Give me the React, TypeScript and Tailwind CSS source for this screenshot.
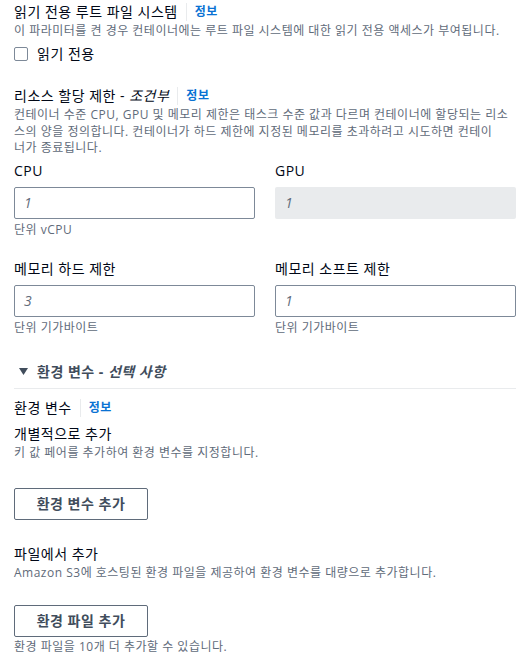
import React from "react";

const font = { fontFamily: '"Open Sans", "Noto Sans CJK KR", sans-serif' };

function Info() {
  return (
    <span className="flex items-center">
      <span className="mx-[8px] h-[18px] w-px bg-[#e9ebed]" />
      <span className="text-[12px] font-bold text-[#0972d3]">정보</span>
    </span>
  );
}

function Field({
  label,
  value,
  hint,
  disabled,
}: {
  label: string;
  value: string;
  hint?: string;
  disabled?: boolean;
}) {
  return (
    <div className="flex flex-col">
      <div className="text-[14px] leading-5 text-[#000716]">{label}</div>
      <div
        className={
          disabled
            ? "mt-[6px] flex h-8 items-center rounded-[2px] bg-[#e9ebed] px-[10px]"
            : "mt-[6px] flex h-8 items-center rounded-[2px] border border-[#7d8998] bg-white px-[9px]"
        }
      >
        <span className="text-[14px] italic text-[#5f6b7a]">{value}</span>
      </div>
      {hint ? (
        <div className="mt-[3px] text-[12px] leading-4 text-[#5f6b7a]">{hint}</div>
      ) : null}
    </div>
  );
}

export default function App() {
  return (
    <div
      className="min-h-[663px] w-[529px] bg-white pl-[14px] pr-[13px] pt-[2px] tracking-[0.5px]"
      style={font}
    >
      {/* Read-only root FS */}
      <div className="flex items-center text-[14px] leading-5 text-[#000716]">
        읽기 전용 루트 파일 시스템
        <Info />
      </div>
      <div className="mt-px text-[12px] leading-4 text-[#5f6b7a]">
        이 파라미터를 켠 경우 컨테이너에는 루트 파일 시스템에 대한 읽기 전용 액세스가 부여됩니다.
      </div>
      <div className="mt-[8px] flex h-[14px] items-center">
        <span className="h-[14px] w-[14px] rounded-[2px] border border-[#7d8998] bg-white" />
        <span className="ml-[9px] text-[14px] leading-5 text-[#000716]">읽기 전용</span>
      </div>

      {/* Resource limits */}
      <div className="mt-[25px] flex items-center text-[14px] leading-5 text-[#000716]">
        <span>
          리소스 할당 제한 - <i>조건부</i>
        </span>
        <Info />
      </div>
      <div className="mt-px text-[12px] leading-[16.5px] text-[#5f6b7a]">
        컨테이너 수준 CPU, GPU 및 메모리 제한은 태스크 수준 값과 다르며 컨테이너에 할당되는 리소
        <br />
        스의 양을 정의합니다. 컨테이너가 하드 제한에 지정된 메모리를 초과하려고 시도하면 컨테이
        <br />
        너가 종료됩니다.
      </div>

      <div className="mt-[4px] grid grid-cols-2 gap-x-[20px]">
        <Field label="CPU" value="1" hint="단위 vCPU" />
        <Field label="GPU" value="1" disabled />
      </div>

      <div className="mt-[21px] grid grid-cols-2 gap-x-[20px]">
        <Field label="메모리 하드 제한" value="3" hint="단위 기가바이트" />
        <Field label="메모리 소프트 제한" value="1" hint="단위 기가바이트" />
      </div>

      {/* Environment variables */}
      <div className="mt-[26px] border-b border-[#e9ebed] pb-[6px]">
        <div className="flex items-center text-[14px] font-bold leading-5 text-[#414d5c]">
          <svg width="9" height="7" viewBox="0 0 9 7" className="ml-[5px] mr-[9px]">
            <path d="M0 0 L9 0 L4.5 7 Z" fill="#414d5c" />
          </svg>
          <span>
            환경 변수 - <i>선택 사항</i>
          </span>
        </div>
      </div>

      <div className="mt-[9px] flex items-center text-[14px] leading-5 text-[#000716]">
        환경 변수
        <Info />
      </div>
      <div className="mt-[6px] text-[14px] leading-5 text-[#000716]">개별적으로 추가</div>
      <div className="mt-px text-[12px] leading-4 text-[#5f6b7a]">
        키 값 페어를 추가하여 환경 변수를 지정합니다.
      </div>
      <div className="mt-[27px] flex">
        <button className="flex h-8 w-[134px] items-center justify-center rounded-[2px] border border-[#5f6b7a] bg-white text-[14px] font-bold tracking-[0.5px] text-[#414d5c]">
          환경 변수 추가
        </button>
      </div>

      <div className="mt-[24px] text-[14px] leading-5 text-[#000716]">파일에서 추가</div>
      <div className="mt-[1px] text-[12px] leading-4 text-[#5f6b7a]">
        Amazon S3에 호스팅된 환경 파일을 제공하여 환경 변수를 대량으로 추가합니다.
      </div>
      <div className="mt-[24px] flex">
        <button className="flex h-8 w-[134px] items-center justify-center rounded-[2px] border border-[#5f6b7a] bg-white text-[14px] font-bold tracking-[0.5px] text-[#414d5c]">
          환경 파일 추가
        </button>
      </div>
      <div className="mt-[2px] text-[12px] leading-4 text-[#5f6b7a]">
        환경 파일을 10개 더 추가할 수 있습니다.
      </div>
    </div>
  );
}
